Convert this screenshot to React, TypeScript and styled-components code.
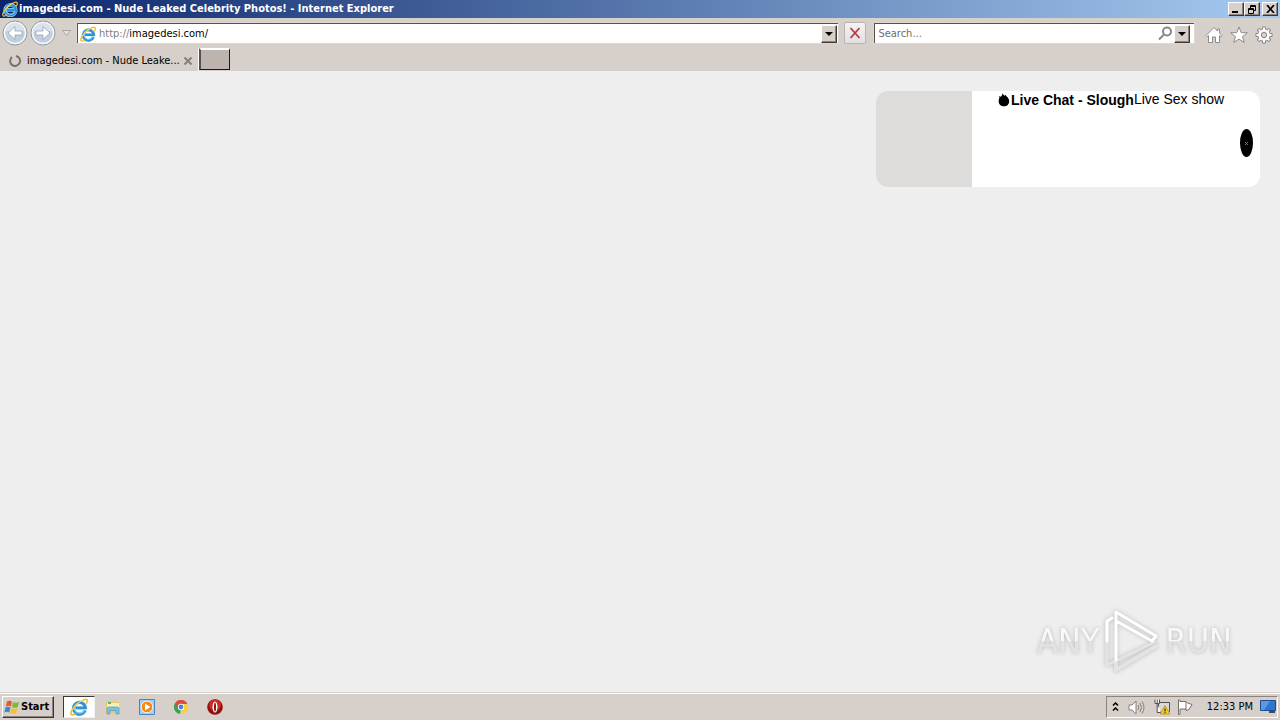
import React from "react";
import styled, { createGlobalStyle, css } from "styled-components";

const Global = createGlobalStyle`
  *, *::before, *::after { box-sizing: border-box; }
  html, body, #root { height: 100%; }
  body {
    margin: 0;
    background: #eeeeee;
    font-family: "DejaVu Sans Condensed", Tahoma, sans-serif;
    font-size: 11px;
    line-height: 14px;
    color: #000;
  }
  button, input { font: inherit; color: inherit; margin: 0; padding: 0; border: 0; background: none; }
  svg { display: block; flex: none; }
`;

const raised = css`
  background: #d6cfca;
  border: 1px solid;
  border-color: #fff #3c3838 #3c3838 #fff;
  box-shadow: inset -1px -1px 0 #8a8480;
`;

const Screen = styled.div`
  display: flex;
  flex-direction: column;
  min-height: 100%;
`;

const TitleBar = styled.header`
  display: flex;
  align-items: center;
  height: 18px;
  padding: 0 2px;
  background: linear-gradient(90deg, #0a246a, #a6caf0);
  color: #fff;
`;

const Title = styled.h1`
  flex: 1;
  margin: 0 0 0 1px;
  font-size: 11px;
  line-height: 16px;
  font-weight: bold;
  white-space: nowrap;
`;

const WindowButton = styled.button<{ $apart?: boolean }>`
  ${raised}
  display: grid;
  place-items: center;
  width: 16px;
  height: 14px;
  margin-left: ${(p) => (p.$apart ? "2px" : "0")};
`;

const NavBar = styled.div`
  display: flex;
  align-items: center;
  height: 30px;
  padding: 0 7px 0 1px;
  background: linear-gradient(#d5d2c9, #d6cfca 60%);
`;

const RoundButton = styled.button`
  width: 28px;
  height: 28px;
  display: grid;
  place-items: center;
`;

const History = styled.button`
  width: 18px;
  height: 20px;
  margin-right: 1px;
  display: grid;
  place-items: center;
`;

const Field = styled.div<{ $grow: number }>`
  display: flex;
  align-items: center;
  flex: ${(p) => p.$grow} 1 0;
  min-width: 0;
  height: 22px;
  padding: 0 1px 0 2px;
  background: #fff;
  border: 2px solid;
  border-color: #57504c #fff #fff #57504c;
  border-width: 2px 1px 1px 2px;
  outline: 1px solid #ddd8d3;
  outline-offset: -1px;
`;

const Scheme = styled.label`
  margin-left: 3px;
  color: #808080;
`;

const TextInput = styled.input`
  flex: 1;
  min-width: 0;
  height: 16px;
  outline: none;
  &::placeholder { color: #6d6d6d; opacity: 1; }
`;

const SearchInput = styled(TextInput)`
  padding-left: 1px;
`;

const DropButton = styled.button`
  ${raised}
  display: grid;
  place-items: center;
  width: 16px;
  height: 18px;
`;

const SearchDrop = styled(DropButton)`
  margin: 0 3px 0 1px;
`;

const StopButton = styled.button`
  display: grid;
  place-items: center;
  width: 22px;
  height: 22px;
  margin: 0 7px 0 5px;
  background: linear-gradient(#f5f2f3, #e4dfe4);
  border: 1px solid #b9b4ba;
  border-radius: 2px;
`;

const Tools = styled.div`
  display: flex;
  gap: 7px;
  margin: 3px 0 0 10px;
`;

const ToolButton = styled.button`
  width: 18px;
  height: 18px;
`;

const TabRow = styled.div`
  display: flex;
  height: 23px;
  background: #d6cfca;
`;

const Tab = styled.div`
  display: flex;
  align-items: center;
  width: 199px;
  padding: 2px 4px 0 8px;
  border-right: 1px solid #fff;
`;

const TabTitle = styled.span`
  flex: 1;
  margin-left: 5px;
  overflow: hidden;
  white-space: nowrap;
`;

const CloseTab = styled.button`
  width: 12px;
  height: 12px;
  display: grid;
  place-items: center;
`;

const NewTab = styled.button`
  width: 31px;
  height: 22px;
  background: #bdb4b0;
  border: 1px solid;
  border-color: #fff #1c1818 #1c1818 #57504c;
  border-width: 2px 1px 1px 2px;
`;

const Page = styled.main`
  flex: 1;
  display: flex;
  flex-direction: column;
  justify-content: space-between;
  align-items: flex-end;
  padding: 20px;
  font-family: "Liberation Sans", Arial, sans-serif;
  font-size: 14px;
  line-height: 16px;
`;

const Card = styled.article`
  display: flex;
  width: 384px;
  height: 96px;
  border-radius: 12px;
  overflow: hidden;
  background: #fff;
`;

const Thumb = styled.div`
  width: 96px;
  background: #dedcdb;
`;

const CardText = styled.div`
  flex: 1;
  display: flex;
  align-items: flex-start;
  padding-left: 26px;
  white-space: nowrap;
`;

const CardTitle = styled.strong`
  display: flex;
  align-items: center;
  gap: 1px;
  line-height: 18px;
`;

const CardClose = styled.button`
  align-self: center;
  display: grid;
  place-items: center;
  width: 13px;
  height: 28px;
  margin: 8px 7px 0 0;
  border-radius: 50%;
  background: #000;
  color: #777;
`;

const Watermark = styled.div`
  display: flex;
  align-items: center;
  gap: 5px;
  margin-right: 28px;
  filter: drop-shadow(0 0 2px #b8b8b8);
`;

const Word = styled.span`
  font-family: "DejaVu Sans Condensed", sans-serif;
  font-size: 34px;
  line-height: 64px;
  background: linear-gradient(#f8f8f8 0 50%, #e3e3e3 50% 100%);
  background-clip: text;
  color: transparent;
`;

const Taskbar = styled.footer`
  display: flex;
  align-items: center;
  height: 27px;
  padding: 0 2px;
  background: #d6cfca;
  border-top: 1px solid #fff;
  box-shadow: 0 -1px 0 #d6cfca;
`;

const StartButton = styled.button`
  ${raised}
  display: flex;
  align-items: center;
  gap: 1px;
  width: 52px;
  height: 22px;
  padding-left: 1px;
  margin-right: 9px;
  font-weight: bold;
`;

const TaskButton = styled.button<{ $active?: boolean }>`
  display: grid;
  place-items: center;
  width: 32px;
  height: 22px;
  margin-right: 2px;
  ${(p) =>
    p.$active &&
    css`
      background: #fff;
      border: 1px solid;
      border-color: #3c3838 #f3f0ee #f3f0ee #3c3838;
    `}
`;

const Tray = styled.div`
  display: flex;
  align-items: center;
  height: 22px;
  margin-left: auto;
  padding: 0 1px 0 4px;
  border: 1px solid;
  border-color: #8a8480 #fff #fff #8a8480;
`;

const TrayButton = styled.button<{ $width: number }>`
  display: grid;
  place-items: center;
  width: ${(p) => p.$width}px;
  height: 20px;
`;

const Clock = styled.time`
  margin: 0 7px 0 5px;
  white-space: nowrap;
`;

const IeIcon = ({ size = 16 }: { size?: number }) => (
  <svg width={size} height={size} viewBox="0 0 16 16" fill="none">
    <path d="M13.4 11A5.300 5.300 0 1 1 13.700 8.800H5" stroke="#d5edfb" strokeWidth="3.400" />
    <path d="M13.400 11A5.300 5.300 0 1 1 13.700 8.800H5" stroke="#2d93d8" strokeWidth="2.600" />
    <path d="M12.800 11A4.700 4.700 0 0 1 4 8.800" stroke="#7fd0f6" strokeWidth="1" />
    <path d="M11 2.300C13.200.9 15.200.6 15.300 2.300c.1 1-.3 1.900-.9 2.800M2.600 9.600C.8 12 .2 14.300 1.400 14.900c1 .4 2.600-.3 3.800-1.200" stroke="#f0b81c" strokeWidth="1.300" />
    <path d="M2.300 10.400C4 6.500 7.500 3.600 11.300 2.100" stroke="#f8d34d" strokeWidth="1.300" />
  </svg>
);

const ArrowCircle = ({ flip }: { flip?: boolean }) => (
  <svg width="26" height="26" viewBox="0 0 26 26">
    <circle cx="13" cy="13" r="12" fill="#dfe3e9" stroke="#8c96a5" strokeWidth="1" />
    <circle cx="13" cy="13" r="10.500" fill="#c2cedd" stroke="#f4f7fa" strokeWidth="1.500" />
    <path d="M4 11a9 8 0 0 1 18 0z" fill="#dbe2eb" />
    <path
      d={flip ? "M13 6.500 20 13l-7 6.500v-4.500H6v-4h7z" : "M13 6.500 6 13l7 6.500v-4.500h7v-4h-7z"}
      fill="#fff"
      stroke="#93a3b8"
      strokeWidth=".8"
    />
  </svg>
);

const DownArrow = () => (
  <svg width="8" height="4" viewBox="0 0 8 4"><path d="M0 0h8L4 4z" /></svg>
);

const App: React.FC = () => (
  <>
    <Global />
    <Screen>
      <TitleBar>
        <IeIcon />
        <Title>imagedesi.com - Nude Leaked Celebrity Photos! - Internet Explorer</Title>
        <WindowButton aria-label="Minimize">
          <svg width="10" height="8"><path d="M1 6h6v2H1z" /></svg>
        </WindowButton>
        <WindowButton aria-label="Restore">
          <svg width="10" height="9" fill="none" stroke="#000">
            <path d="M3.500 3V.5h5v5H7M3 1.500h6" />
            <path d="M1.500 3.500h5v5h-5zM1 4.500h6" />
          </svg>
        </WindowButton>
        <WindowButton aria-label="Close" $apart>
          <svg width="9" height="8" stroke="#000" strokeWidth="1.700"><path d="M1 0l7 8M8 0L1 8" /></svg>
        </WindowButton>
      </TitleBar>

      <NavBar>
        <RoundButton aria-label="Back"><ArrowCircle /></RoundButton>
        <RoundButton aria-label="Forward"><ArrowCircle flip /></RoundButton>
        <History aria-label="Recent pages">
          <svg width="9" height="6" viewBox="0 0 9 6"><path d="M.5.5h8l-4 5z" fill="#e4e0dc" stroke="#aaa5a1" /></svg>
        </History>
        <Field $grow={12}>
          <IeIcon />
          <Scheme htmlFor="address">http://</Scheme>
          <TextInput id="address" defaultValue="imagedesi.com/" />
          <DropButton aria-label="Show address list"><DownArrow /></DropButton>
        </Field>
        <StopButton aria-label="Stop">
          <svg width="12" height="12" stroke="#b9393d" strokeWidth="1.800"><path d="M1.500 1l9 10M10.500 1l-9 10" /></svg>
        </StopButton>
        <Field $grow={5}>
          <SearchInput aria-label="Search" placeholder="Search..." />
          <svg width="15" height="15" viewBox="0 0 15 15" fill="none" stroke="#8b8785" strokeWidth="2">
            <circle cx="9" cy="5.500" r="4" /><path d="M6 8.500 1 13.500" />
          </svg>
          <SearchDrop aria-label="Search options"><DownArrow /></SearchDrop>
        </Field>
        <Tools>
          <ToolButton aria-label="Home">
            <svg width="18" height="18" viewBox="0 0 18 18" fill="#fff" stroke="#8f8a88">
              <path d="M9 1.500 1 9.500l1.200 1.200 1.300-1V16.500H7.500V11h3v5.500h4V9.700l1.300 1L17 9.500 14.500 7V3h-2v2z" />
            </svg>
          </ToolButton>
          <ToolButton aria-label="Favorites">
            <svg width="18" height="18" viewBox="0 0 18 18" fill="#fff" stroke="#8f8a88">
              <path d="M9 .9l2.200 5.700 6.100.2-4.800 3.800 1.700 5.900L9 13.100l-5.200 3.400 1.700-5.900L.7 6.800l6.100-.2z" />
            </svg>
          </ToolButton>
          <ToolButton aria-label="Tools">
            <svg width="18" height="18" viewBox="0 0 18 18" fill="none">
              <g stroke="#8f8a88">
                <circle cx="9" cy="9" r="4.500" strokeWidth="4.400" />
                <path d="M9 .5v17M.5 9h17M3 3l12 12M15 3 3 15" strokeWidth="3.800" />
              </g>
              <g stroke="#fff">
                <circle cx="9" cy="9" r="4.500" strokeWidth="2.600" />
                <path d="M9 1.400v15.200M1.400 9h15.200M3.700 3.700l10.600 10.600M14.300 3.700 3.700 14.300" strokeWidth="1.900" />
              </g>
              <circle cx="9" cy="9" r="2.700" fill="#d6cfca" stroke="#8f8a88" />
            </svg>
          </ToolButton>
        </Tools>
      </NavBar>

      <TabRow>
        <Tab>
          <svg width="14" height="14" fill="none" stroke="#77716e" strokeWidth="2">
            <path d="M8 2a5 5 0 1 1-4 1" />
          </svg>
          <TabTitle>imagedesi.com - Nude Leake...</TabTitle>
          <CloseTab aria-label="Close tab">
            <svg width="8" height="8" stroke="#85807d" strokeWidth="2"><path d="M.5.5l7 7M7.500.5l-7 7" /></svg>
          </CloseTab>
        </Tab>
        <NewTab aria-label="New tab" />
      </TabRow>

      <Page>
        <Card>
          <Thumb />
          <CardText>
            <CardTitle>
              <svg width="12" height="14" viewBox="0 0 12 14">
                <path d="M4.500 0c.4 1.500 1.500 2 2.300 3l.7-1.200c.8 1.600 3.700 3.300 3.700 6.200 0 3.300-2 5.300-5.200 5.300S.7 11.400.7 8.500C.7 7 1 5.500 1.500 4.500L1 3l1.600.8C3.500 3 4.700 2 4.500 0z" />
              </svg>
              Live Chat - Slough
            </CardTitle>
            <span>Live Sex show</span>
          </CardText>
          <CardClose aria-label="Dismiss">
            <svg width="3" height="3" stroke="currentColor"><path d="M0 0l3 3M3 0L0 3" /></svg>
          </CardClose>
        </Card>
        <Watermark>
          <Word>ANY</Word>
          <svg width="56" height="64" viewBox="0 0 56 64" fill="none" strokeLinejoin="round" strokeLinecap="round">
            <path d="M8 9 3 12v44L51 33" stroke="#e3e3e3" strokeWidth="3" />
            <path d="M12 60v-6M12 61 52 37" stroke="#e3e3e3" strokeWidth="4" />
            <path d="M12 51V3l40 24-4 5-36-20" stroke="#fff" strokeWidth="3" />
            <path d="M3 32V12l5-3" stroke="#fff" strokeWidth="3" />
          </svg>
          <Word>RUN</Word>
        </Watermark>
      </Page>

      <Taskbar>
        <StartButton>
          <svg width="16" height="16" viewBox="0 0 16 16">
            <path d="M3 2.500C5 1.300 6.500 1.600 8 2.500L6.800 7.500C5 6.500 3.600 6.600 1.800 7.500z" fill="#e8582a" />
            <path d="M9 3c2 1 4 1 6-.3L13.800 8c-2 1.200-4 1.100-6 0z" fill="#7dba3c" />
            <path d="M1.500 8.500c1.800-1 3.400-.9 5 0L5.300 13.400c-1.600-1-3.300-1-5 0z" fill="#3f86d3" />
            <path d="M7.500 9c2 1.100 4 1.200 6 0l-1.200 5c-2 1.200-4 1.100-6 0z" fill="#f5c12e" />
          </svg>
          Start
        </StartButton>
        <TaskButton $active aria-label="Internet Explorer"><IeIcon size={18} /></TaskButton>
        <TaskButton aria-label="File Explorer">
          <svg width="16" height="16" viewBox="0 0 16 16">
            <path d="M1 2h5l1 1h7v11H1z" fill="#e9c968" />
            <path d="M2 4h12v5H2z" fill="#fbf0b4" />
            <path d="M3 3h3v2H3z" fill="#5bb562" />
            <path d="M2 15V9.500C2 8.500 3 8 4 8h8c1 0 2 .5 2 1.500V15h-3v-3.500H5V15z" fill="#7cc0e6" stroke="#4f9cc8" strokeWidth=".7" />
          </svg>
        </TaskButton>
        <TaskButton aria-label="Media Player">
          <svg width="16" height="16" viewBox="0 0 16 16">
            <path d="M.5.5h15v15H.5z" fill="#a9cdec" stroke="#4c82bd" />
            <circle cx="8" cy="8" r="5.800" fill="#f28a1e" stroke="#fff" strokeWidth=".8" />
            <path d="M6 4.500v7L11.500 8z" fill="#fff" />
          </svg>
        </TaskButton>
        <TaskButton aria-label="Chrome">
          <svg width="14" height="14" viewBox="0 0 14 14">
            <path d="M7 7 .9 3.500A7 7 0 0 1 13.100 3.500z" fill="#dd4b3e" />
            <path d="M7 7V0l6.100 3.500A7 7 0 0 1 7 14z" fill="#fbcf3b" />
            <path d="M7 7l-1 7A7 7 0 0 1 .9 3.500z" fill="#34a353" />
            <path d="M.9 3.500A7 7 0 0 1 13.100 3.500L13.300 4H7L4 8.500z" fill="#dd4b3e" />
            <circle cx="7" cy="7" r="3.200" fill="#fff" /><circle cx="7" cy="7" r="2.400" fill="#4385e8" />
          </svg>
        </TaskButton>
        <TaskButton aria-label="Opera">
          <svg width="16" height="16" viewBox="0 0 16 16">
            <circle cx="8" cy="8" r="7.800" fill="#8f1010" />
            <ellipse cx="8" cy="6" rx="6" ry="5.500" fill="#cc2a25" />
            <ellipse cx="8" cy="8" rx="2.500" ry="5.500" fill="#fff" /><ellipse cx="8" cy="8" rx="1" ry="4.500" fill="#8f1010" />
          </svg>
        </TaskButton>
        <Tray>
          <TrayButton $width={9} aria-label="Show hidden icons">
            <svg width="7" height="10" fill="none" stroke="#000" strokeWidth="1.500"><path d="M1 3.500l2.500-2.500L6 3.500M1 8.500 3.500 6 6 8.500" /></svg>
          </TrayButton>
          <TrayButton $width={34} aria-label="Volume">
            <svg width="17" height="15" viewBox="0 0 17 15" fill="none" stroke="#85807d">
              <path d="M1 5h3l4-4v13l-4-4H1z" fill="#fff" />
              <path d="M10 5q1.500 2.500 0 5M12 3q3 4.500 0 9M14 1.500q4 6 0 12" />
            </svg>
          </TrayButton>
          <TrayButton $width={15} aria-label="Network">
            <svg width="17" height="16" viewBox="0 0 17 16" fill="none" stroke="#55504e">
              <path d="M4.500 3.500h11v9h-11z" fill="#d9d9d9" />
              <path d="M1 .5v4h4.500v-4M3.200.5v3.500M3.200 5v8.500H7" fill="#fff" />
              <path d="M11 6.500 15.800 15h-9.600z" fill="#f7cf2b" stroke="#c79a12" />
              <path d="M11 9.500v3M11 13.200v1" stroke="#000" />
            </svg>
          </TrayButton>
          <TrayButton $width={33} aria-label="Action Center">
            <svg width="16" height="16" viewBox="0 0 16 16" fill="#fff" stroke="#77716e">
              <path d="M1.500 1v14.500h1.500V10h6v1.500l3-1 3-5-4.500-1.500L9 2.500H3V1z" />
              <path d="M9 10V3" />
            </svg>
          </TrayButton>
          <Clock>12:33 PM</Clock>
          <TrayButton $width={16} aria-label="Show desktop">
            <svg width="16" height="14" viewBox="0 0 16 14">
              <path d="M.5.5h15v10H.5z" fill="#2f76cf" stroke="#1d4e91" />
              <path d="M1 1h9L4 10H1z" fill="#5a9ae3" />
              <path d="M9 11h6v2H9z" fill="#374b66" />
            </svg>
          </TrayButton>
        </Tray>
      </Taskbar>
    </Screen>
  </>
);

export default App;
